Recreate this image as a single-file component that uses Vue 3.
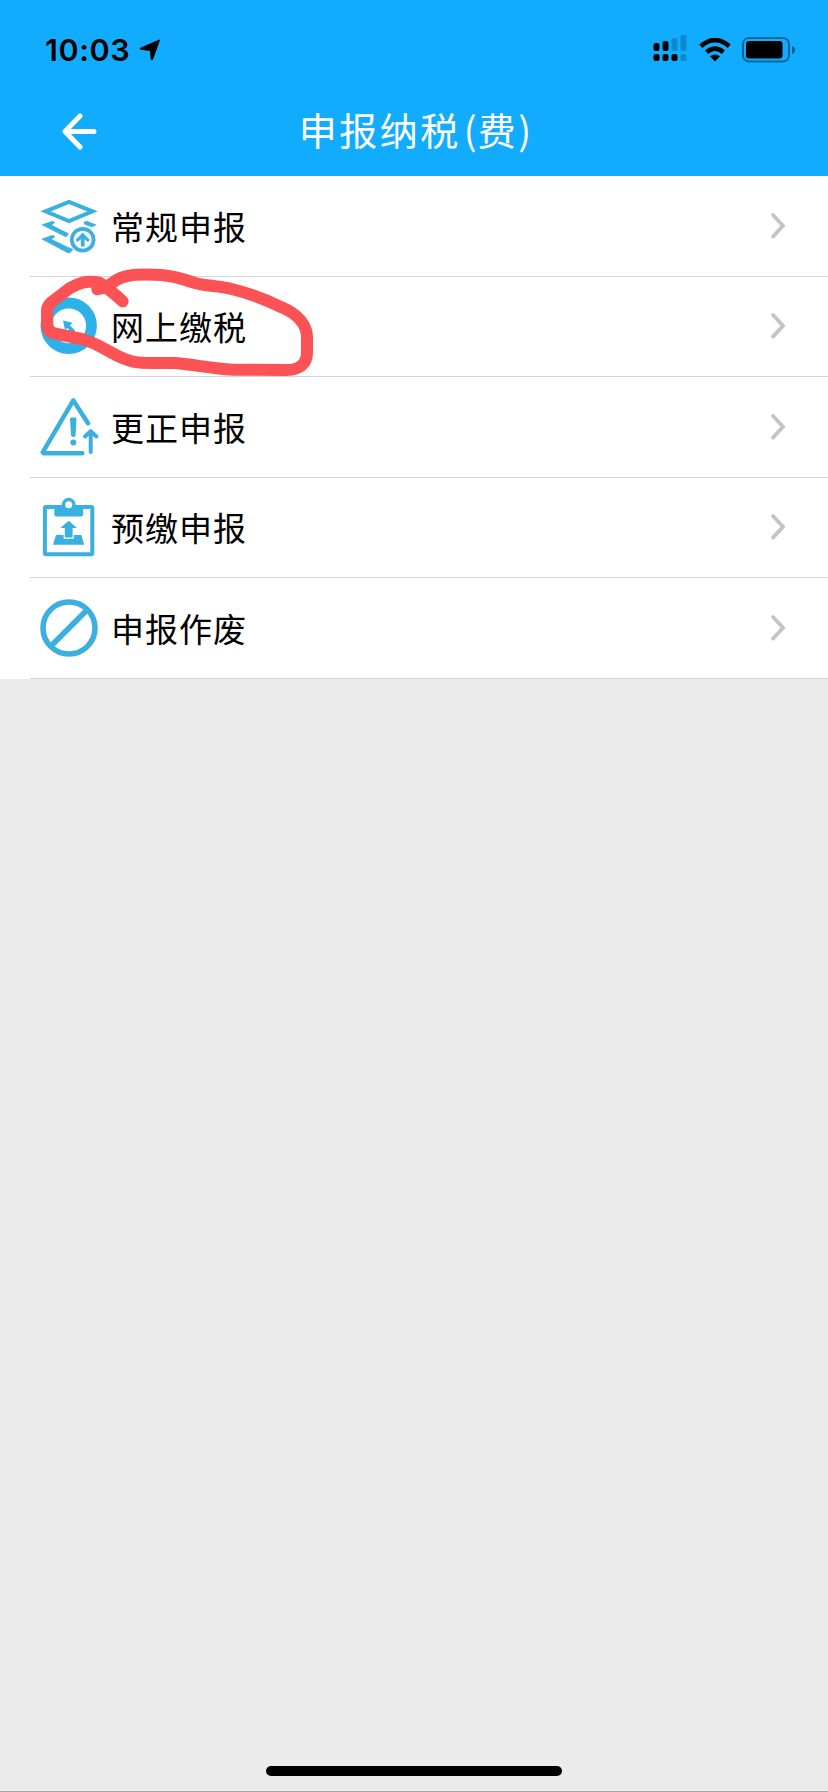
<script setup>
const items = [
  { icon: 'layers', label: '常规申报' },
  { icon: 'online', label: '网上缴税' },
  { icon: 'correct', label: '更正申报' },
  { icon: 'prepay', label: '预缴申报' },
  { icon: 'void', label: '申报作废' },
]
</script>

<template>
  <div class="screen">
    <header class="header">
      <div class="status">
        <span class="time">10:03</span>
        <svg class="locate" viewBox="0 0 22 22"><path d="M21 1.2 14.2 20q-1.4 2.4-2.6 0L11 12 1.8 10.8q-2-1 0-2.2L19.8.7q1.5-.5 1.2.5z" /></svg>
        <span class="grow"></span>
        <svg class="signal" viewBox="0 0 34 28">
          <g class="faint">
            <rect x="18.5" y="4" width="6" height="13" rx="2" />
            <rect x="27.5" y="1" width="6" height="16" rx="2" />
            <rect x="27.5" y="20" width="6" height="7" rx="2" />
          </g>
          <rect x=".5" y="9" width="6" height="8" rx="2" />
          <rect x="9.5" y="7" width="6" height="10" rx="2" />
          <rect x=".5" y="20" width="6" height="7" rx="2" />
          <rect x="9.5" y="20" width="6" height="7" rx="2" />
          <rect x="18.5" y="20" width="6" height="7" rx="2" />
        </svg>
        <svg class="wifi" viewBox="0 0 32 24">
          <path class="arc" d="M1.8 8.2Q16-4 30.2 8.2M7.6 14.2q8.4-7 16.8 0" />
          <path d="M11 18.2q5-3.6 10 0L16 23.6z" />
        </svg>
        <svg class="battery" viewBox="0 0 54 26">
          <rect class="shell" x="1" y="1" width="46" height="23.5" rx="6" />
          <rect x="4" y="4" width="36.5" height="17.5" rx="3" />
          <path class="tip" d="M50 9q3 1 3 4t-3 4z" />
        </svg>
      </div>
      <div class="nav">
        <svg class="back" viewBox="0 0 36 40"><path d="M18 4 3 19.5 18 35M3 19.5h29" /></svg>
        <h1 class="title"><span>申报纳税</span><span class="paren open">(</span><span>费</span><span class="paren">)</span></h1>
      </div>
    </header>

    <main class="list">
      <div v-for="item in items" :key="item.icon" class="row">
        <svg class="icon" viewBox="0 0 60 60">
          <g v-if="item.icon === 'layers'">
            <path class="line" stroke-width="4" d="M5.5 15.3 29 5.8l23.5 9.5L29 25.2z" />
            <path d="M1.2 28.7 12.3 25l3.2 1.5-3.7 2.6 17.2 8.4-3 3.8zM44 25.8l3-.8 9.8 3.7-4.8 2.5-8-3zM1.2 43l11.1-4 3.2 1.5-3.7 2.8L29 51.5l4.5 1.7-3.5 3.7h-2.5z" />
            <circle class="line" cx="42.7" cy="43.7" r="10.9" stroke-width="3.7" />
            <path d="m42.7 36.5 7.2 7.4-2 2-3.3-2.7v7.3h-3.8v-7.3L37.5 46l-2-2z" />
          </g>
          <g v-else-if="item.icon === 'online'" class="bright">
            <circle class="line" cx="28.7" cy="29.8" r="22.8" stroke-width="10.8" />
            <path d="m23 24.5 9.5 2.2-2.7 2.5 5 5v5.2l-7.6-7.4-2.2 2z" />
          </g>
          <g v-else-if="item.icon === 'correct'">
            <path class="line round" stroke-width="4.5" d="M48 26.3 33.3 3.4 2.7 55.3l1.2 1h38.5" />
            <path d="M30 22q0-1.5 1.5-1.5H35q1.5 0 1.5 1.5l-1 17q-2.2 1.8-4.4 0z" />
            <circle cx="33.3" cy="45.5" r="3" />
            <path class="line round" stroke-width="4" d="M50.7 55V35M45 39.5l5.7-5.3 5.7 5.3" />
          </g>
          <g v-else-if="item.icon === 'prepay'">
            <rect class="line" x="4.9" y="10.1" width="47.4" height="47.2" rx="1" stroke-width="4" />
            <path d="M14.3 9h28.8v8.5q0 2-2 2H16.3q-2 0-2-2z" />
            <circle class="clip" cx="28.7" cy="7.7" r="5.2" stroke-width="3.4" />
            <path d="M16 38h25.4l2.8 9.8H13z" />
            <path class="cutout" d="m28.7 23.7 8.3 7.2h-4.4v9.6h-7.8v-9.6h-4.4z" />
          </g>
          <g v-else>
            <circle class="line" cx="29" cy="30" r="26" stroke-width="5.6" />
            <path class="line" stroke-width="5.6" d="m12 47 35-35" />
          </g>
        </svg>
        <span class="label">{{ item.label }}</span>
        <svg class="chevron" viewBox="0 0 16 28"><path d="m3 3 10 10.8L3 24.6" /></svg>
      </div>
      <svg class="marker" viewBox="0 0 930 390">
        <path d="M308 124C285 103 265 85 238 68C200 60 180 68 150 84L96 125Q82 137 81 152L82 196Q83 217 106 221L156 231C215 240 240 260 290 286C335 308 350 309 400 309L465 309C530 314 570 326 640 329L800 330C840 330 861 310 861 278L861 232C861 197 837 164 785 142C740 120 690 100 635 87C590 75 560 81 515 66C445 42 400 42 345 44C300 47 283 66 262 78Q245 87 232 88" />
      </svg>
    </main>

    <footer class="footer"><div class="home"></div></footer>
  </div>
</template>

<style>
body {
  margin: 0;
}
</style>

<style scoped>
.screen {
  display: flex;
  flex-direction: column;
  width: 828px;
  height: 1792px;
  background: #ebebeb;
  color: #000;
  font-family: "Liberation Sans", "Noto Sans CJK SC", sans-serif;
  overflow: hidden;
}

.header {
  height: 176px;
  background: #12acff;
}

.status {
  display: flex;
  align-items: center;
  box-sizing: border-box;
  height: 88px;
  padding: 12px 32px 0 45px;
}

.time {
  width: 94px;
  font: 600 30.5px/36px Inter, sans-serif;
  letter-spacing: 0.6px;
  white-space: nowrap;
}

.locate {
  width: 22px;
  height: 22px;
}

.grow {
  flex: 1;
}

.signal {
  width: 34px;
  height: 28px;
  margin: -4px 12px 0 0;
}

.faint {
  opacity: 0.2;
}

.wifi {
  width: 32px;
  height: 24px;
  margin-right: 11px;
}

.arc {
  fill: none;
  stroke: #000;
  stroke-width: 4.6;
}

.battery {
  width: 54px;
  height: 26px;
}

.shell {
  fill: none;
  stroke: #000;
  stroke-width: 2;
  opacity: 0.4;
}

.tip {
  opacity: 0.45;
}

.nav {
  position: relative;
  display: flex;
  align-items: center;
  justify-content: center;
  height: 88px;
}

.back {
  position: absolute;
  left: 62px;
  top: 24px;
  width: 36px;
  height: 40px;
  fill: none;
  stroke: #fff;
  stroke-width: 5;
  stroke-linecap: round;
  stroke-linejoin: round;
}

.title {
  display: flex;
  margin: 0 0 7px 3px;
  color: #fff;
  font: 400 38px/50px "Noto Sans CJK SC", sans-serif;
  letter-spacing: 2.5px;
}

.paren {
  width: 14px;
  letter-spacing: 0;
}

.open {
  margin-left: 3px;
}

.list {
  position: relative;
  background: #fff;
}

.row {
  display: flex;
  align-items: center;
  box-sizing: border-box;
  height: 101px;
  padding: 0 42px 2px 40px;
  background: linear-gradient(#d6d6d8, #d6d6d8) 30px 100% / 798px 1px no-repeat;
}

.row:nth-child(even) {
  height: 100px;
}

.icon {
  width: 60px;
  height: 60px;
  fill: #3bafdf;
  stroke: none;
}

.line {
  fill: none;
  stroke: #3bafdf;
}

.bright {
  fill: #2eb1e8;
}

.bright .line {
  stroke: #2eb1e8;
}

.round {
  stroke-linecap: round;
  stroke-linejoin: round;
}

.clip {
  fill: #fff;
  stroke: #3bafdf;
}

.cutout {
  stroke: #fff;
  stroke-width: 2.4;
  paint-order: stroke;
}

.label {
  flex: 1;
  margin-left: 11px;
  font: 400 33px/48px "Noto Sans CJK SC", sans-serif;
  letter-spacing: 1px;
}

.chevron {
  width: 16px;
  height: 28px;
  fill: none;
  stroke: #c4c4c6;
  stroke-width: 3.8;
  stroke-linecap: round;
}

.marker {
  position: absolute;
  left: 20px;
  top: 84px;
  width: 310px;
  height: 130px;
  fill: none;
  stroke: #fb5255;
  stroke-width: 36;
  stroke-linecap: round;
  stroke-linejoin: round;
}

.footer {
  display: flex;
  justify-content: center;
  align-items: flex-end;
  box-sizing: border-box;
  height: 40px;
  margin-top: auto;
  padding-bottom: 15px;
  border-bottom: 1px solid #a5a5a5;
}

.home {
  width: 296px;
  height: 10px;
  border-radius: 5px;
  background: #000;
}
</style>
